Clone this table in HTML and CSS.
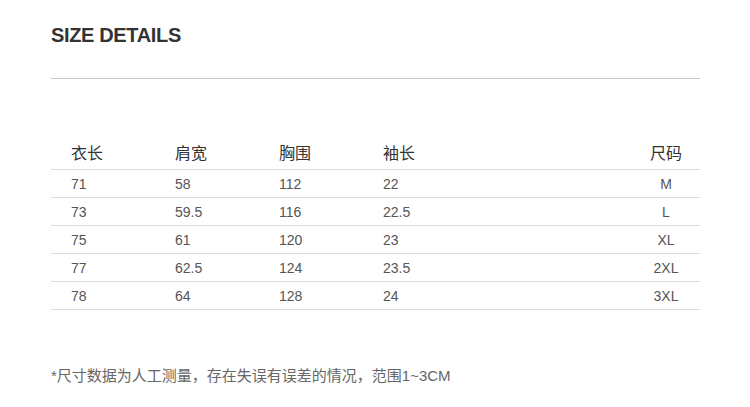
FILE: index.html
```html
<!DOCTYPE html>
<html lang="zh">
<head>
<meta charset="utf-8">
<link rel="stylesheet" href="styles.css">
</head>
<body>
<div class="page">
  <h1 class="title">SIZE DETAILS</h1>
  <div class="rule"></div>
  <div class="table">
    <div class="row head">
      <div class="cell">衣长</div>
      <div class="cell">肩宽</div>
      <div class="cell">胸围</div>
      <div class="cell">袖长</div>
      <div class="cell size">尺码</div>
    </div>
    <div class="row">
      <div class="cell">71</div><div class="cell">58</div><div class="cell">112</div><div class="cell">22</div><div class="cell size">M</div>
    </div>
    <div class="row">
      <div class="cell">73</div><div class="cell">59.5</div><div class="cell">116</div><div class="cell">22.5</div><div class="cell size">L</div>
    </div>
    <div class="row">
      <div class="cell">75</div><div class="cell">61</div><div class="cell">120</div><div class="cell">23</div><div class="cell size">XL</div>
    </div>
    <div class="row">
      <div class="cell">77</div><div class="cell">62.5</div><div class="cell">124</div><div class="cell">23.5</div><div class="cell size">2XL</div>
    </div>
    <div class="row">
      <div class="cell">78</div><div class="cell">64</div><div class="cell">128</div><div class="cell">24</div><div class="cell size">3XL</div>
    </div>
  </div>
  <p class="note">*尺寸数据为人工测量，存在失误有误差的情况，范围1~3CM</p>
</div>
</body>
</html>
```

FILE: styles.css
```css
html, body {
  margin: 0;
  padding: 0;
  background: #fff;
}
body {
  font-family: "Liberation Sans", "Noto Sans CJK SC", sans-serif;
  color: #333;
}
.page {
  width: 649px;
  padding: 0 0 0 51px;
}
.title {
  margin: 0;
  padding-top: 24px;
  height: 22px;
  line-height: 22px;
  font-size: 20px;
  font-weight: bold;
  letter-spacing: -0.35px;
  color: #333;
}
.rule {
  margin-top: 32px;
  height: 1px;
  background: #c8c8c8;
}
.table {
  margin-top: 61px;
}
.row {
  display: grid;
  grid-template-columns: 104px 104px 104px 104px 1fr 68px;
  height: 27px;
  border-bottom: 1px solid #dcdcdc;
  align-items: center;
  font-size: 14px;
  color: #555;
}
.row.head {
  height: 24px;
  padding-bottom: 5px;
  font-size: 16px;
  color: #333;
}
.cell {
  padding-left: 20px;
}
.cell.size {
  grid-column: 6;
  padding-left: 0;
  text-align: center;
}
.note {
  margin: 56px 0 0;
  font-size: 15px;
  color: #666;
  line-height: 20px;
}
```
